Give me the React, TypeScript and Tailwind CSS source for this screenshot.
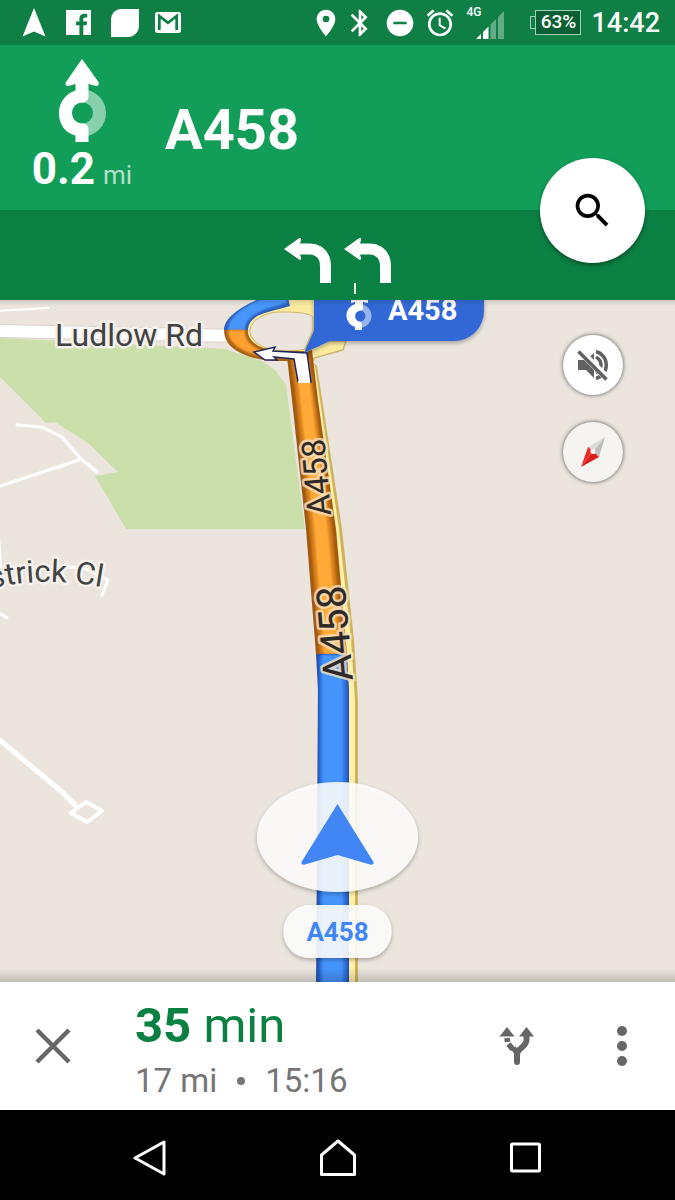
import React from "react";
import { MdAlarm, MdBluetooth, MdDoNotDisturbOn, MdLocationOn, MdSearch } from "react-icons/md";

function StatusBar() {
  return (
    <div className="flex h-[45px] items-center justify-between bg-[#0f7f45] pr-[15px] pl-[22px] text-white">
      <div className="flex items-center gap-5">
        <svg className="h-[29px] w-6" viewBox="0 0 24 29" fill="currentColor" aria-hidden="true">
          <path d="M12 0 23.500 28.500 12 23.500.5 28.500Z" />
        </svg>
        <svg className="h-[25px] w-[25px]" viewBox="0 0 25 25" aria-hidden="true">
          <path
            fill="currentColor"
            fillRule="evenodd"
            d="M0 0H25V25H17.300V15.200H20.600L21.100 11.400H17.300V9.200C17.300 8.100 17.700 7.400 19.200 7.400H21.200V4C20.800 3.900 19.600 3.800 18.300 3.800 15.400 3.800 13.400 5.500 13.400 8.800V11.400H10V15.200H13.400V25H0Z"
          />
        </svg>
        <svg className="h-7 w-7" viewBox="0 0 28 28" fill="currentColor" aria-hidden="true">
          <path d="M10 0H28V17C28 23 23 28 17 28H0V11C0 5 4 0 10 0Z" />
        </svg>
        <svg className="-ml-1 h-[21px] w-[26px]" viewBox="0 0 26 21" aria-hidden="true">
          <rect width="26" height="21" rx="2.500" fill="currentColor" />
          <path d="M4.300 18V4L13 10.800 21.700 4V18" fill="none" stroke="#0f7f45" strokeWidth="2.800" />
        </svg>
      </div>
      <div className="flex items-center gap-2.5">
        <div className="flex items-center gap-2">
          <div className="flex items-center gap-0.5">
            <MdLocationOn size={32} aria-hidden="true" />
            <MdBluetooth size={32} aria-hidden="true" />
          </div>
          <MdDoNotDisturbOn size={32} aria-hidden="true" />
          <div className="flex items-center gap-2.5">
            <MdAlarm size={32} aria-hidden="true" />
            <div className="relative flex h-[33px] w-[38px] items-end justify-end">
              <span className="absolute top-0 left-0 font-medium text-[12px] leading-3">4G</span>
              <svg className="h-7 w-7" viewBox="0 0 28 28" fill="currentColor" aria-hidden="true">
                <path d="M0 28 5 23V28ZM7 21 12.500 15.500V28H7Z" />
                <path d="M14.500 13.500 20 8V28H14.500ZM22 6 28 0V28H22Z" opacity=".35" />
              </svg>
            </div>
          </div>
        </div>
        <div className="ml-4 flex items-center">
          <div className="h-[13px] w-[5px] border border-r-0 border-[#9fd0b5]" />
          <div className="flex h-[25px] w-[46px] items-center justify-center border border-[#9fd0b5] bg-[#0b5f34] text-[19px] font-medium">
            63%
          </div>
        </div>
        <time className="text-[27px] leading-8 font-medium">14:42</time>
      </div>
    </div>
  );
}

function RoundaboutIcon() {
  return (
    <svg className="h-[84px] w-[48px]" viewBox="0 0 48 84" aria-hidden="true">
      <circle cx="24.500" cy="54" r="17" fill="none" stroke="#88cfab" strokeWidth="13" />
      <path
        fill="#fff"
        d="M24 0 40.500 23C41.500 26 39.500 28 36.500 26.500L30.500 25V37C30.500 41 28 43.500 24.500 43.500 18 43.500 14 48 14 54S18 64.500 24.500 64.500C28.500 64.500 30.500 67 30.500 70V83H17.500V76.500C7 74 1 65 1 54 1 43.500 8 34.500 17.500 31.500V25L12 26.500C8.500 28 6.500 26 8 23Z"
      />
    </svg>
  );
}

function LaneArrow() {
  return (
    <svg className="h-[46px] w-12" viewBox="0 0 48 46" aria-hidden="true">
      <path
        fill="#fff"
        d="M0 11 15 .3C16.500-.3 17.300.5 17 2L16 5.500H25C38.500 5.500 47 14.500 47 28V45H36V28C36 20.500 32 16.500 25 16.500H16L17 20C17.300 21.800 16.200 22.300 15 21.500Z"
      />
    </svg>
  );
}

function MapCanvas() {
  const halo = "fill-[#424242] stroke-[#f5f1ec] stroke-[5px] [paint-order:stroke] [stroke-linejoin:round]";
  const roadHalo = "fill-[#2e2a28] stroke-[#fbe3c4]/80 stroke-[5px] [paint-order:stroke] [stroke-linejoin:round]";
  return (
    <svg className="absolute inset-0 h-full w-full" viewBox="0 300 675 682" preserveAspectRatio="xMidYMid slice" role="img" aria-label="Route map along the A458">
      <defs>
        <path id="street-curve" d="M-9 589Q48 573 130 593" />
        <filter id="edge" x="-10%" y="-2%" width="120%" height="104%">
          <feGaussianBlur stdDeviation="1" />
        </filter>
        <filter id="soft" x="-20%" y="-20%" width="140%" height="150%">
          <feDropShadow dx="0" dy="2" stdDeviation="2" floodColor="#000" floodOpacity=".32" />
        </filter>
        <linearGradient id="top-shade" x1="0" y1="0" x2="0" y2="1">
          <stop offset="0" stopColor="#000" stopOpacity=".12" />
          <stop offset="1" stopColor="#000" stopOpacity="0" />
        </linearGradient>
        <linearGradient id="bottom-shade" x1="0" y1="0" x2="0" y2="1">
          <stop offset="0" stopColor="#000" stopOpacity="0" />
          <stop offset="1" stopColor="#000" stopOpacity=".18" />
        </linearGradient>
      </defs>
      <rect x="-500" y="0" width="1700" height="1500" fill="#ebe5de" />

      <path d="M0 338 225 349 262 361 275 370 286 385 305 529H126L95 476 118 472 88 443 55 422 46 423 0 377Z" fill="#cbdfab" />
      <g fill="none" stroke="#fff" strokeLinecap="round" strokeLinejoin="round">
        <path d="M-5 311 49 308" strokeWidth="2" />
        <path d="M17 425 42 427 62 437 80 458 97 472M0 486 79 460" strokeWidth="3" />
        <path d="M-2 530 1 572M68 567 84 568 108 580 102 595" strokeWidth="3" />
        <path d="M-5 610 7 618" strokeWidth="3" />
        <path d="M-5 736 62 792 76 806" strokeWidth="5" />
        <path d="M71 813 86 802 102 811 87 822Z" strokeWidth="4" />
      </g>
      <path d="M-5 331 240 336" stroke="#d9d2cb" strokeWidth="14" />
      <path d="M-5 331 240 336" stroke="#fff" strokeWidth="12" />

      <path d="M246 331C246 315 262 300 285 298H325V352H275C258 350 246 343 246 331Z" fill="#fbeaa0" />
      <path d="M296 350 320 341 346 341 343 350 314 358 311 366Z" fill="#fbeaa0" stroke="#cbb568" strokeWidth="1.500" />
      <path d="M250 330C252 318 268 311 285 312 300 312 313 314 313 318V330L305 349C300 351 284 351 275 350 260 348 249 339 250 330Z" fill="#ebe5de" stroke="#cbb568" strokeWidth="1" />

      <path d="M308 358 317 366 342 529 354 640 358 700V990H344V700L330 529Z" fill="#cdb35e" />
      <path d="M308 358 315 366 339 529 351 640 355 700V990H348V700L334 529Z" fill="#fff0a8" />

      <path d="M262 298C243 305 224 317 224 330H248C248 321 256 315 268 312L290 306 288 298Z" fill="#2a5ebb" />
      <path d="M264 298C246 305 228 317 228 330H245C245 320 254 313 266 309L287 303 286 298Z" fill="#4996fb" filter="url(#edge)" />
      <path d="M224 330C224 343 233 350 245 355 260 361 275 361 294 361L305 351H275C258 348 247 341 248 330Z" fill="#a86112" />
      <path d="M228 330C228 341 236 347 247 352 262 358 275 358 296 358L302 354H275C255 351 244 342 245 330Z" fill="#ffa030" filter="url(#edge)" />

      <path d="M287 357 312 350 318 400 336 529 347 654H316L306 529 292 400Z" fill="#a15a10" />
      <path d="M291 358H309L315 400 332 529 343 654H320L310 529 296 400Z" fill="#d87f1c" filter="url(#edge)" />
      <path d="M295 358H307L312 400 328 529 339 654H324L314 529 300 400Z" fill="#ffaa38" filter="url(#edge)" />
      <path d="M316 654H347L349 690V990H316L318 690Z" fill="#2450aa" />
      <path d="M319 655H345L347 690V990H319Z" fill="#2f72e2" filter="url(#edge)" />
      <path d="M322 655H341L343 690V990H322Z" fill="#4594fc" filter="url(#edge)" />
      <path d="M254 352 275 347 273 351 307 353 311 382H298L294 359 274 357 277 360 265 360Z" fill="#fff" stroke="#20275f" strokeWidth="1.500" />
      <path d="M298 382H310" stroke="#fff" strokeWidth="2" />

      <text x="55" y="346" className={halo + " text-[32px]"}>Ludlow Rd</text>
      <text className={halo + " text-[31px]"}>
        <textPath href="#street-curve">strick Cl</textPath>
      </text>
      <text transform="translate(331 515) rotate(-95)" className={roadHalo + " text-[33px]"}>A458</text>
      <text transform="translate(353 680) rotate(-95)" className={roadHalo + " text-[41px]"}>A458</text>

      <g filter="url(#soft)">
        <path d="M314 280H484V311A30 30 0 0 1 454 341H330L304 353 314 330Z" fill="#3367d6" />
      </g>
      <circle cx="360" cy="316" r="8.500" fill="none" stroke="#99b3eb" strokeWidth="6" />
      <path
        d="M351 300H368V303L363 302V308C363 310 361 310.500 359 311A5.500 5.500 0 0 0 359 321.500C361 322 362 323 362 325V330H355V327A12 12 0 0 1 355 304V302L351 303Z"
        fill="#fff"
      />
      <text x="388" y="320" className="fill-white text-[29px] font-bold">A458</text>

      <rect x="-500" y="300" width="1700" height="6" fill="url(#top-shade)" />
      <rect x="-500" y="968" width="1700" height="14" fill="url(#bottom-shade)" />

      <ellipse cx="337.500" cy="837" rx="80.500" ry="55" fill="#fff" fillOpacity=".86" filter="url(#soft)" />
      <path d="M337.500 804 373.500 862C374 864 372.500 865 370 864.500L337.500 855 305 864.500C302.500 865 301 864 301.500 862Z" fill="#4285f4" />
      <rect x="283.500" y="905" width="108" height="53" rx="26" fill="#fff" fillOpacity=".88" filter="url(#soft)" />
      <text x="337.500" y="941" textAnchor="middle" className="fill-[#4285f4] text-[26px] font-bold">A458</text>
    </svg>
  );
}

export default function App() {
  return (
    <main className="flex min-h-screen flex-col bg-black font-['Roboto',sans-serif]">
      <header className="relative z-10 text-white">
        <StatusBar />
        <div className="flex h-[165px] bg-[#129e58] pl-[31px]">
          <div className="flex w-[102px] flex-col items-center pt-[14px]">
            <RoundaboutIcon />
            <p className="flex items-baseline gap-2 leading-[52px]">
              <span className="text-[44px] font-bold">0.2</span>
              <span className="text-[26px] text-white/70">mi</span>
            </p>
          </div>
          <h1 className="pt-[52px] pl-8 text-[56px] leading-[66px] font-bold">A458</h1>
        </div>
        <div className="relative flex h-[90px] justify-center gap-3 bg-[#0b8043] pt-7">
          <LaneArrow />
          <LaneArrow />
          <span className="absolute bottom-1.5 left-1/2 ml-4 h-[11px] w-0.5 bg-white/90" />
        </div>
        <button
          type="button"
          aria-label="Search along route"
          className="absolute right-[30px] bottom-[37px] flex h-[105px] w-[105px] items-center justify-center rounded-full bg-white text-black shadow-[0_2px_4px_rgba(0,0,0,0.4)]"
        >
          <MdSearch size={45} />
        </button>
      </header>

      <section className="relative flex-1 overflow-hidden" aria-label="Map">
        <MapCanvas />
        <div className="absolute top-[35px] right-[52px] flex flex-col gap-[27px]">
          <button
            type="button"
            aria-label="Unmute guidance"
            className="flex h-[60px] w-[60px] items-center justify-center rounded-full bg-white text-[#616161] shadow-[0_0_4px_rgba(0,0,0,0.65)]"
          >
            <svg className="h-[38px] w-[38px]" viewBox="0 0 38 38" aria-hidden="true">
              <path fill="currentColor" d="M4 14H12L20 7V32L12 24H4Z" />
              <path d="M22 11Q27 14 27 19T22 27M22 5.500A14 14 0 0 1 22 32.500" fill="none" stroke="currentColor" strokeWidth="3.500" />
              <path d="M4 3 34 33" stroke="#fff" strokeWidth="7" />
              <path d="M4.500 5.500 32.500 33.500" stroke="currentColor" strokeWidth="3.500" />
            </svg>
          </button>
          <button
            type="button"
            aria-label="Compass"
            className="flex h-[60px] w-[60px] items-center justify-center rounded-full bg-[#f5f4f0] shadow-[0_0_4px_rgba(0,0,0,0.65)]"
          >
            <svg className="h-8 w-7" viewBox="0 0 28 32" aria-hidden="true">
              <path d="M26 1 9 11 14 15.500Z" fill="#dadada" />
              <path d="M26 1 14 15.500 20 21Z" fill="#bdbdbd" />
              <path d="M9 11 2 31 14 15.500Z" fill="#ef2b25" />
              <path d="M20 21 2 31 14 15.500Z" fill="#d81e1e" />
              <circle cx="14" cy="15.500" r="2.500" fill="#fff" />
            </svg>
          </button>
        </div>
      </section>

      <section className="flex h-32 items-center bg-white pr-[43px] text-[#666]" aria-label="Trip summary">
        <button type="button" aria-label="Close navigation" className="flex h-full w-[105px] items-center justify-center">
          <svg className="h-9 w-9" viewBox="0 0 36 36" aria-hidden="true">
            <path d="M2 2 34 34M34 2 2 34" stroke="currentColor" strokeWidth="4.500" />
          </svg>
        </button>
        <div className="flex-1 pt-3.5 pl-[30px]">
          <p className="text-[49px] leading-[56px] text-[#0b8043]">
            <strong className="font-bold">35</strong> min
          </p>
          <p className="flex items-center gap-5 text-[33px] leading-[54px] text-[#757575]">
            <span>17 mi</span>
            <span className="h-2 w-2 rounded-full bg-[#757575]" />
            <span>15:16</span>
          </p>
        </div>
        <button type="button" aria-label="Alternate routes" className="flex h-full w-[76px] items-center justify-center">
          <svg className="h-[38px] w-9" viewBox="0 0 36 38" aria-hidden="true">
            <path d="M8 0 15.500 9.500H.5ZM27.500 0 35 9.500H20Z" fill="currentColor" />
            <path d="M27.500 8V13C27.500 20 18 21 18 28V35" fill="none" stroke="currentColor" strokeWidth="6" strokeLinecap="round" />
            <path d="M8 11 8.500 15M9.500 17 14 22.500M14.500 21 18 26" fill="none" stroke="currentColor" strokeWidth="5.500" />
          </svg>
        </button>
        <button type="button" aria-label="More options" className="ml-[57px] flex h-full w-[20px] items-center justify-center">
          <svg className="h-10 w-3" viewBox="0 0 12 40" fill="currentColor" aria-hidden="true">
            <circle cx="6" cy="5" r="5" />
            <circle cx="6" cy="20" r="5" />
            <circle cx="6" cy="35" r="5" />
          </svg>
        </button>
      </section>

      <nav className="flex h-[90px] items-center justify-center gap-[150px] bg-black text-white" aria-label="System">
        <button type="button" aria-label="Back" className="pt-1.5">
          <svg className="h-9 w-[38px]" viewBox="0 0 38 36" fill="none" aria-hidden="true">
            <path d="M33 2V34L4 18Z" stroke="currentColor" strokeWidth="3" strokeLinejoin="round" />
          </svg>
        </button>
        <button type="button" aria-label="Home" className="pt-1.5">
          <svg className="h-[38px] w-[38px]" viewBox="0 0 38 38" fill="none" aria-hidden="true">
            <path d="M19 2 35.500 16V35.500H2.500V16Z" stroke="currentColor" strokeWidth="3" strokeLinejoin="round" />
          </svg>
        </button>
        <button type="button" aria-label="Recent apps" className="pt-1.5">
          <svg className="h-8 w-[38px]" viewBox="0 0 38 32" fill="none" aria-hidden="true">
            <rect x="4.500" y="2" width="28" height="27" rx="1" stroke="currentColor" strokeWidth="3" />
          </svg>
        </button>
      </nav>
    </main>
  );
}
